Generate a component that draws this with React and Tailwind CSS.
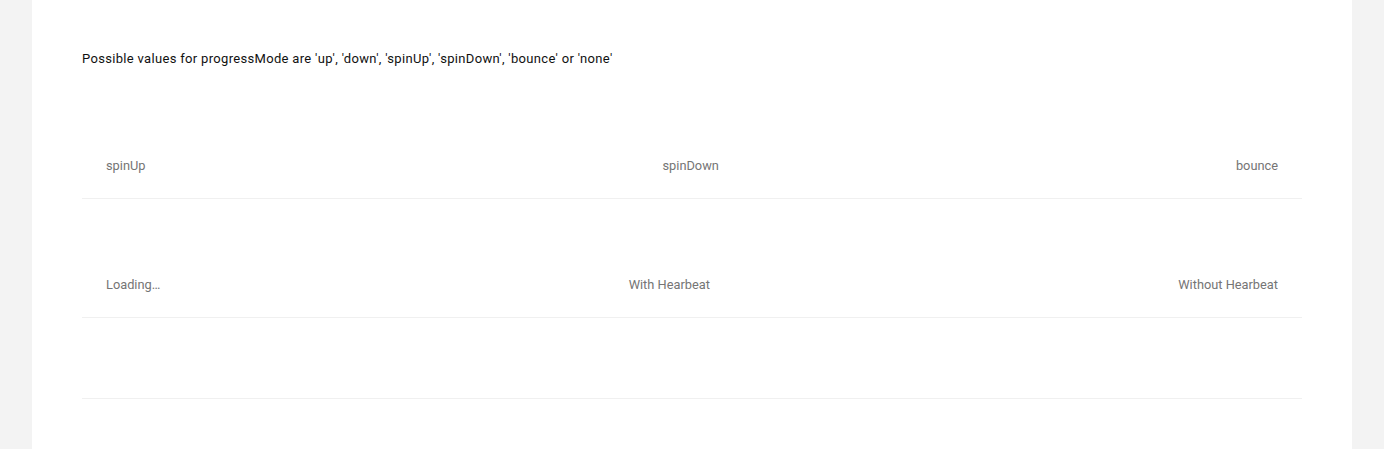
export default function App() {
  const rows = [
    { labels: ['spinUp', 'spinDown', 'bounce'], h: 'h-[120px]' },
    { labels: ['Loading…', 'With Hearbeat', 'Without Hearbeat'], h: 'h-[119px]' },
    { labels: [], h: 'h-[81px]' },
  ];

  return (
    <div className="min-h-screen bg-[#f3f3f3] px-8 font-['Roboto',sans-serif]">
      <div className="bg-white min-h-[449px] px-[50px] pt-[49px]">
        <p className="text-[13px] leading-5 text-[#111] tracking-[0.32px]">
          Possible values for progressMode are 'up', 'down', 'spinUp', 'spinDown', 'bounce' or 'none'
        </p>
        <div className="mt-[10px]">
          {rows.map((row, i) => (
            <div
              key={i}
              className={`${row.h} flex items-end justify-between border-b border-[#f0f0f0]`}
            >
              {row.labels.map(label => (
                <div key={label} className="px-6 pb-[22px] text-[12.8px] leading-5 text-[#757575]">
                  {label}
                </div>
              ))}
            </div>
          ))}
        </div>
      </div>
    </div>
  );
}
